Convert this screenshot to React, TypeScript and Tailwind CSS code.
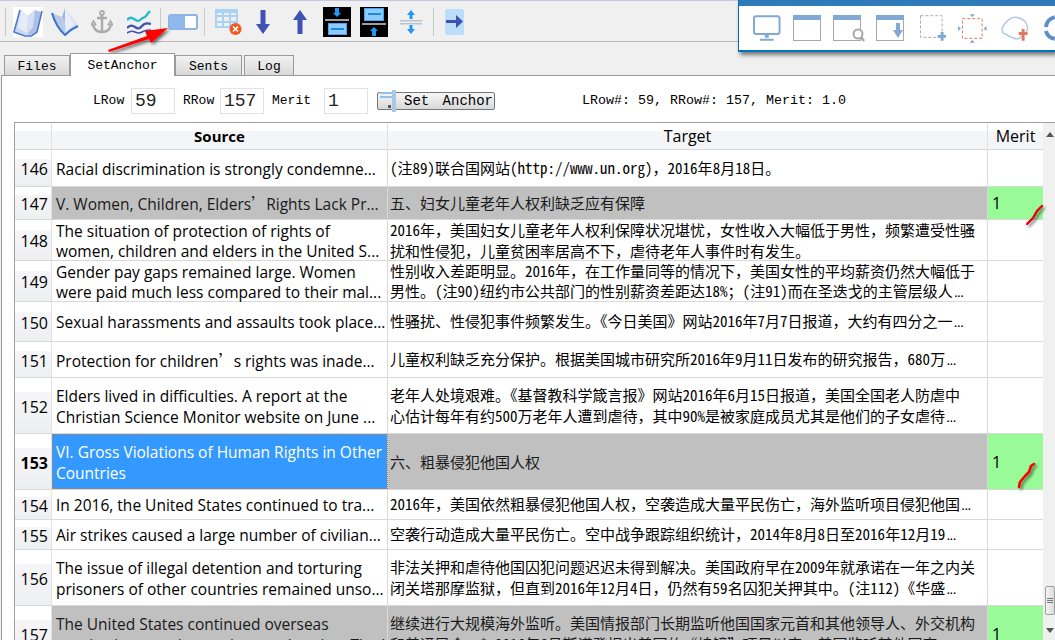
import React from "react";

const SRC = "font-['Open_Sans','Noto_Sans',sans-serif] text-[15.5px]";
const NUM = "font-['Open_Sans','Noto_Sans',sans-serif] text-[16px]";
const Q = () => <span className="inline-block w-[15px] font-['Noto_Sans_CJK_SC']">’</span>;

type Row = { n: number; h: number; s: React.ReactNode[]; t: string[]; gray?: boolean; sel?: boolean };
const rows: Row[] = [
  { n: 146, h: 37, s: ["Racial discrimination is strongly condemne..."], t: ["(注89)联合国网站(http://www.un.org)，2016年8月18日。"] },
  { n: 147, h: 33, gray: true, s: [<>V. Women, Children, Elders<Q />Rights Lack Pr...</>], t: ["五、妇女儿童老年人权利缺乏应有保障"] },
  { n: 148, h: 41, s: ["The situation of protection of rights of", "women, children and elders in the United S..."], t: ["2016年，美国妇女儿童老年人权利保障状况堪忧，女性收入大幅低于男性，频繁遭受性骚", "扰和性侵犯，儿童贫困率居高不下，虐待老年人事件时有发生。"] },
  { n: 149, h: 41, s: ["Gender pay gaps remained large. Women", "were paid much less compared to their mal..."], t: ["性别收入差距明显。2016年，在工作量同等的情况下，美国女性的平均薪资仍然大幅低于", "男性。(注90)纽约市公共部门的性别薪资差距达18%；(注91)而在圣迭戈的主管层级人..."] },
  { n: 150, h: 40, s: ["Sexual harassments and assaults took place..."], t: ["性骚扰、性侵犯事件频繁发生。《今日美国》网站2016年7月7日报道，大约有四分之一..."] },
  { n: 151, h: 36, s: [<>Protection for children<Q />s rights was inade...</>], t: ["儿童权利缺乏充分保护。根据美国城市研究所2016年9月11日发布的研究报告，680万..."] },
  { n: 152, h: 56, s: ["Elders lived in difficulties. A report at the", "Christian Science Monitor website on June ..."], t: ["老年人处境艰难。《基督教科学箴言报》网站2016年6月15日报道，美国全国老人防虐中", "心估计每年有约500万老年人遭到虐待，其中90%是被家庭成员尤其是他们的子女虐待..."] },
  { n: 153, h: 56, gray: true, sel: true, s: ["VI. Gross Violations of Human Rights in Other", "Countries"], t: ["六、粗暴侵犯他国人权"] },
  { n: 154, h: 30, s: ["In 2016, the United States continued to tra..."], t: ["2016年，美国依然粗暴侵犯他国人权，空袭造成大量平民伤亡，海外监听项目侵犯他国..."] },
  { n: 155, h: 30, s: ["Air strikes caused a large number of civilian..."], t: ["空袭行动造成大量平民伤亡。空中战争跟踪组织统计，2014年8月8日至2016年12月19..."] },
  { n: 156, h: 56, s: ["The issue of illegal detention and torturing", "prisoners of other countries remained unso..."], t: ["非法关押和虐待他国囚犯问题迟迟未得到解决。美国政府早在2009年就承诺在一年之内关", "闭关塔那摩监狱，但直到2016年12月4日，仍然有59名囚犯关押其中。(注112)《华盛..."] },
  { n: 157, h: 56, gray: true, s: ["The United States continued overseas", "monitoring on other nations and spying. The U..."], t: ["继续进行大规模海外监听。美国情报部门长期监听他国国家元首和其他领导人、外交机构", "和普通民众。* 2016年6月斯诺登揭出美国的“棱镜”项目以来，美国监听其他国家..."] },
];

const TargetLine = ({ text }: { text: string }) => {
  const more = text.endsWith("...");
  const body = more ? text.slice(0, -3) : text;
  const parts = body.split(/([\x20-\x7e]+)/);
  return (
    <div>
      {parts.map((p, i) =>
        i % 2 === 1 ? (
          <span key={i} className="[font-feature-settings:'hwid']">{p}</span>
        ) : (
          <span key={i}>{p}</span>
        )
      )}
      {more && <span className="font-['Liberation_Sans'] tracking-[-1px] ml-[1px]">...</span>}
    </div>
  );
};

const Sep = () => <div className="w-px h-[28px] bg-[#c8c8c8] shrink-0" />;
const Cell = ({ w, children }: { w: string; children: React.ReactNode }) => (
  <div className={`${w} h-full flex items-center justify-center shrink-0`}>{children}</div>
);

const Book1 = () => (
  <svg width="30" height="30" viewBox="0 0 30 30" className="bg-white">
    <path d="M2 25 L8 3 L15 9 L15 28 L12 28 Z" fill="#cbd6f0" />
    <path d="M15 9 L22 3 L28 5 L24 24 L17 28 L15 28 Z" fill="#aebfe8" />
    <path d="M8 3 L5 21 L14 26 L15 9 Z" fill="#e6ebf8" />
    <path d="M22 3 L20 20 L15 26 L15 9 Z" fill="#d6dff4" />
    <path d="M7 3 L1 25 L12 29 L18 29 L24 25 L29 4" fill="none" stroke="#4a78cc" strokeWidth="1.6" strokeLinejoin="round" />
  </svg>
);
const Book2 = () => (
  <svg width="30" height="30" viewBox="0 0 30 30">
    <path d="M2 6 L12 10 L15 14 L15 28 Q6 20 2 6 Z" fill="#b9c9ea" />
    <path d="M12 10 L15 1 L15 14 Z" fill="#9fb4e0" />
    <path d="M15 1 L28 19 L15 28 L15 14 Z" fill="#d3ddf3" />
    <path d="M15 1 L25 18 L16 24 L15 14 Z" fill="#e8edf9" />
    <path d="M2 6 Q6 20 15 28 Q21 22 28 19" fill="none" stroke="#3a72c6" strokeWidth="2" strokeLinejoin="round" />
  </svg>
);
const Anchor = () => (
  <svg width="22" height="24" viewBox="0 0 22 24" fill="none" stroke="#ababab" strokeWidth="2.4">
    <circle cx="11" cy="3" r="2" strokeWidth="1.8" />
    <path d="M11 5 V22 M6 8 H16 M2 14 Q3 22 11 22 Q19 22 20 14" />
    <path d="M0 15.5 L2.5 11 L5 15.5 M22 15.5 L19.5 11 L17 15.5" strokeWidth="1.6" />
  </svg>
);
const Waves = () => (
  <svg width="24" height="24" viewBox="0 0 24 24" fill="none" strokeWidth="2.2">
    <path d="M0 10 Q3 6 7 9 T13 10 T18 7 L23 1" stroke="#1fb9cf" />
    <path d="M0 18 Q4 14 8 17 T15 16 T24 14" stroke="#3f51b5" />
    <path d="M0 23 Q4 20 8 22 T15 22 T24 20" stroke="#3f51b5" strokeWidth="1.6" />
  </svg>
);
const Toggle = () => (
  <div className="w-[30px] h-[16px] rounded-[3px] border-2 border-[#8db4e2] bg-white flex">
    <div className="w-[15px] h-full bg-[#8fb8ec]" />
  </div>
);
const TableX = () => (
  <svg width="27" height="26" viewBox="0 0 27 26">
    <g fill="none" stroke="#a9d2f5" strokeWidth="2">
      <path d="M1 1 H22 V18 H1 Z M1 7 H22 M1 13 H22 M8 1 V19 M15 1 V19" />
    </g>
    <path d="M1 1 H22 V4 H1 Z" fill="#a9d2f5" />
    <circle cx="20.5" cy="20" r="6" fill="#f0591f" />
    <path d="M18 17.5 L23 22.5 M23 17.5 L18 22.5" stroke="#fff" strokeWidth="1.6" />
  </svg>
);
const ArrowV = ({ up }: { up?: boolean }) => (
  <svg width="14" height="24" viewBox="0 0 14 24" fill="#3f51b5">
    <path d={up ? "M7 0 L14 10 H9.5 V24 H4.5 V10 H0 Z" : "M7 24 L14 14 H9.5 V0 H4.5 V14 H0 Z"} />
  </svg>
);
const BlackDown = () => (
  <svg width="28" height="30" viewBox="0 0 28 30">
    <rect width="28" height="30" fill="#000" />
    <path d="M14 10 L18 6 H16 V1 H12 V6 H10 Z" fill="#2196f3" />
    <rect x="2" y="12" width="24" height="2" fill="#9e9e9e" />
    <rect x="5.5" y="16.5" width="18" height="11" fill="#90caf9" stroke="#42a5f5" />
    <rect x="8" y="21" width="13" height="2" fill="#1e88e5" />
  </svg>
);
const BlackUp = () => (
  <svg width="28" height="30" viewBox="0 0 28 30">
    <rect width="28" height="30" fill="#000" />
    <rect x="4.5" y="1.5" width="19" height="12" fill="#90caf9" stroke="#42a5f5" />
    <rect x="8" y="6" width="13" height="2" fill="#1e88e5" />
    <rect x="2" y="16" width="24" height="2" fill="#9e9e9e" />
    <path d="M14 20 L18 24 H16 V29 H12 V24 H10 Z" fill="#2196f3" />
  </svg>
);
const Split = () => (
  <svg width="22" height="24" viewBox="0 0 22 24">
    <path d="M11 0 L15 5 H12.5 V9 H9.5 V5 H7 Z M11 24 L15 19 H12.5 V15 H9.5 V19 H7 Z" fill="#2196f3" />
    <rect y="10" width="22" height="1.5" fill="#b6c4cf" />
    <rect y="13" width="22" height="1.5" fill="#b6c4cf" />
  </svg>
);
const ArrowBox = () => (
  <div className="w-[19px] h-[26px] rounded-[2px] bg-[#bbdefb] flex items-center justify-center">
    <svg width="17" height="13" viewBox="0 0 17 13" fill="#3f51b5"><path d="M0 5 H10 V0 L17 6.5 L10 13 V8 H0 Z" /></svg>
  </div>
);

const Win = ({ children }: { children?: React.ReactNode }) => (
  <svg width="32" height="29" viewBox="0 0 32 29" fill="none">
    <rect x="0.5" y="2.5" width="27" height="24" stroke="#a8a8a8" />
    <rect y="1" width="28" height="5" fill="#82a9d1" />
    {children}
  </svg>
);

const FloatBar = () => (
  <div className="absolute right-0 top-0 w-[317px] h-[52px] bg-white border-l border-b-2 border-[#0072c6] shadow-[2px_3px_4px_rgba(0,0,0,0.5)] flex flex-col">
    <div className="h-[6px] bg-[#2f7ab8] shrink-0" />
    <div className="flex items-center flex-1 pl-[14px]">
      <svg width="28" height="27" viewBox="0 0 28 27" fill="none" className="mr-[12px]">
        <rect x="1" y="1" width="26" height="18" rx="2" stroke="#82a9d1" strokeWidth="2" />
        <path d="M12 20 H16 V23 H12 Z M7 24 H21 V26 H7 Z" fill="#82a9d1" />
      </svg>
      <div className="mr-[8px]"><Win /></div>
      <div className="mr-[11px]">
        <Win><circle cx="25" cy="20" r="4.5" fill="#fff" stroke="#a8a8a8" strokeWidth="2" /><path d="M28 23 L31 27" stroke="#a8a8a8" strokeWidth="2.5" /></Win>
      </div>
      <div className="mr-[12px]">
        <Win><path d="M20 9 H24 V16 H27 L22 24 L17 16 H20 Z" fill="#82a9d1" /></Win>
      </div>
      <svg width="27" height="27" viewBox="0 0 27 27" fill="none" className="mr-[12px]">
        <rect x="0.5" y="0.5" width="22" height="22" stroke="#a8a8a8" strokeDasharray="3 2" />
        <path d="M18 20 H21 V17 H24 V20 H27 V23 H24 V26 H21 V23 H18 Z" fill="#82a9d1" />
      </svg>
      <svg width="29" height="29" viewBox="0 0 29 29" fill="none" className="mr-[14px]">
        <rect x="4.5" y="4.5" width="20" height="20" stroke="#e0765a" strokeDasharray="3 2" />
        <path d="M12 0 H17 L14.5 3 Z M12 29 H17 L14.5 26 Z M0 12 V17 L3 14.5 Z M29 12 V17 L26 14.5 Z" fill="#82a9d1" />
      </svg>
      <svg width="28" height="27" viewBox="0 0 28 27" fill="none" className="mr-[15px]">
        <path d="M1 14 C3 7 10 2 15 2 C20 3 27 6 27 13 C27 19 22 20 18 24 C12 25 7 20 2 18 Z" stroke="#a9c6e3" strokeWidth="1.4" />
        <path d="M18 17 H21 V14 H24 V17 H27 V20 H24 V26 H21 V20 H18 Z" fill="#e07a5f" />
      </svg>
      <svg width="12" height="28" viewBox="0 0 12 28" fill="none">
        <path d="M12 3 A11 11 0 0 0 3 13 M3 17 A11 11 0 0 0 12 25" stroke="#5b8fc7" strokeWidth="4" />
      </svg>
    </div>
  </div>
);

const Tab = ({ label, w, active }: { label: string; w: string; active?: boolean }) => (
  <div
    className={
      active
        ? `${w} h-[23px] -mb-px z-10 bg-white border border-b-0 border-[#9a9a9a] flex items-center justify-center text-[13px] pt-[1px]`
        : `${w} h-[20px] border border-b-0 border-[#9a9a9a] bg-[linear-gradient(to_bottom,#f2f2f2,#d9d9d9)] flex items-center justify-center text-[13px] pt-[2px]`
    }
  >
    {label}
  </div>
);

const Field = ({ v }: { v: string }) => (
  <div className="w-[44px] h-[26px] border border-[#dfe3e8] bg-white flex items-center pl-[3px] text-[18px] text-[#222] shrink-0">{v}</div>
);

const COL = { head: "w-[37px]", src: "w-[336px]", tgt: "w-[600px]", merit: "w-[55px]" };

export default function App() {
  return (
    <div className="relative h-[640px] w-[1055px] overflow-hidden bg-[#f0f0f0] text-black font-['Liberation_Mono',monospace]">
      <div className="h-[2px] border-t border-[#c9c9de] bg-[#ececf3]" />
      <div className="h-[40px] border-b border-[#b9b9b9] flex items-center pl-[5px]">
        <Sep />
        <div className="w-[3px]" />
        <Cell w="w-[37px]"><Book1 /></Cell>
        <Cell w="w-[37px]"><Book2 /></Cell>
        <Cell w="w-[37px]"><Anchor /></Cell>
        <Cell w="w-[37px]"><Waves /></Cell>
        <div className="w-[3px]" />
        <Sep />
        <Cell w="w-[43px]"><Toggle /></Cell>
        <Sep />
        <Cell w="w-[46px]"><TableX /></Cell>
        <Cell w="w-[24px]"><ArrowV /></Cell>
        <div className="w-[5px]" />
        <Cell w="w-[40px]"><ArrowV up /></Cell>
        <Cell w="w-[34px]"><BlackDown /></Cell>
        <Cell w="w-[40px]"><BlackUp /></Cell>
        <Cell w="w-[34px]"><Split /></Cell>
        <div className="w-[5px]" />
        <Sep />
        <Cell w="w-[40px]"><ArrowBox /></Cell>
      </div>

      <div className="h-[33px] flex items-end pl-[4px]">
        <Tab label="Files" w="w-[66px]" />
        <Tab label="SetAnchor" w="w-[105px]" active />
        <Tab label="Sents" w="w-[67px]" />
        <div className="w-[2px]" />
        <Tab label="Log" w="w-[50px]" />
      </div>

      <div className="ml-[1px] bg-white border-t border-l border-[#9a9a9a] h-[565px] overflow-hidden">
        <div className="h-[46px] flex items-center text-[13px] pl-[91px] pt-[4px]">
          <span className="w-[38px]">LRow</span>
          <Field v="59" />
          <span className="w-[45px] pl-[8px]">RRow</span>
          <Field v="157" />
          <span className="w-[60px] pl-[8px]">Merit</span>
          <Field v="1" />
          <div className="ml-[9px] w-[118px] h-[18px] border border-[#777] rounded-[2px] bg-[linear-gradient(to_bottom,#f7f7f7,#d8d8d8)] flex items-center text-[14px] pl-[2px] shrink-0">
            <svg width="20" height="22" viewBox="0 0 20 22" className="shrink-0 -my-[3px]">
              <rect x="0" y="2" width="16" height="2" fill="#8fc1ea" />
              <rect x="0" y="6" width="12" height="2" fill="#8fc1ea" />
              <rect x="12" y="0" width="4" height="22" fill="#a9c9e6" />
              <rect x="8" y="15" width="3" height="3" fill="#555" />
            </svg>
            <span className="ml-[4px] whitespace-pre [word-spacing:5px]">Set Anchor</span>
          </div>
          <span className="ml-[87px] whitespace-pre text-[13.33px]">LRow#: 59, RRow#: 157, Merit: 1.0</span>
        </div>

        <div className="ml-[12px] border-t border-l border-[#a0a0a0] flex">
          <div className="w-[1028px] shrink-0">
            <div className="h-[27px] flex border-b border-[#d9d9d9] bg-[linear-gradient(to_bottom,#fff_30%,#f4f5f7_30%)] font-['Open_Sans','Noto_Sans',sans-serif] text-[16px]">
              <div className={`${COL.head} border-r border-[#e2e2e2]`} />
              <div className={`${COL.src} border-r border-[#e2e2e2] flex items-center justify-center font-bold text-[15px]`}>Source</div>
              <div className={`${COL.tgt} border-r border-[#e2e2e2] flex items-center justify-center`}>Target</div>
              <div className={`${COL.merit} flex items-center justify-center`}>Merit</div>
            </div>
            {rows.map((r) => (
              <div key={r.n} className="flex border-b border-[#d9d9d9]" style={{ height: r.h }}>
                <div className={`${COL.head} border-r border-[#e2e2e2] bg-[linear-gradient(to_bottom,#fff_25%,#f6f6f8_25%,#eeeff1_100%)] flex items-center justify-end pr-[3px] pt-[2px] ${NUM} ${r.sel ? "font-bold" : ""}`}>
                  {r.n}
                </div>
                <div
                  className={`${COL.src} border-r border-[#d9d9d9] flex flex-col justify-center pl-[4px] pt-[2px] leading-[20.5px] whitespace-nowrap ${SRC} ${
                    r.sel ? "bg-[#3399ff] text-white outline-1 outline-dotted -outline-offset-1 outline-[#c08040]" : r.gray ? "bg-[#c0c0c0] text-[#1a1a1a]" : ""
                  }`}
                >
                  {r.s.map((l, i) => <div key={i}>{l}</div>)}
                </div>
                <div className={`${COL.tgt} border-r border-[#d9d9d9] flex flex-col justify-center pl-[2px] pt-[1px] text-[15px] leading-[20.5px] whitespace-nowrap font-['Noto_Sans_CJK_SC',sans-serif] ${r.gray ? "bg-[#c0c0c0] text-[#1a1a1a]" : ""}`}>
                  {r.t.map((l, i) => <TargetLine key={i} text={l} />)}
                </div>
                <div className={`${COL.merit} flex items-center pl-[4px] ${NUM} ${r.gray ? "bg-[#98fb98]" : ""}`}>{r.gray ? "1" : ""}</div>
              </div>
            ))}
          </div>
          <div className="w-[12px] shrink-0 bg-[#f0f0f0] relative h-[520px]">
            <svg width="8" height="5" viewBox="0 0 8 5" className="absolute left-[3px] top-[9px]"><path d="M0 5 L4 0 L8 5 Z" fill="#555" /></svg>
            <div className="absolute left-[2px] right-0 top-[463px] h-[29px] border border-[#a0a0a0] rounded-[2px] bg-[linear-gradient(to_right,#f5f5f5,#dcdcdc)] flex flex-col items-center justify-center gap-[1px]">
              <div className="w-[6px] h-px bg-[#777]" /><div className="w-[6px] h-px bg-[#777]" /><div className="w-[6px] h-px bg-[#777]" />
            </div>
            <svg width="8" height="5" viewBox="0 0 8 5" className="absolute left-[3px] top-[505px]"><path d="M0 0 L4 5 L8 0 Z" fill="#555" /></svg>
          </div>
        </div>
      </div>

      <FloatBar />

      {/* annotations drawn on top of the screenshot */}
      <svg width="1055" height="640" viewBox="0 0 1055 640" fill="none" className="absolute left-0 top-0 pointer-events-none">
        <defs>
          <filter id="sh" x="-30%" y="-30%" width="170%" height="170%">
            <feDropShadow dx="2" dy="2" stdDeviation="1.6" floodColor="#000" floodOpacity="0.55" />
          </filter>
        </defs>
        <g filter="url(#sh)">
          <path d="M108 50 L147 36 L145 31 L168 28 L151 43 L149 39 L109 52 Z" fill="#ff0000" />
          <path d="M1027 224 L1033 218 L1037 211 L1042 206" stroke="#e8000c" strokeWidth="2.4" strokeLinecap="round" />
          <path d="M1019 487 L1020 482 L1025 476 L1029 472 L1031 466 L1034 464" stroke="#ff0000" strokeWidth="2.6" strokeLinecap="round" strokeLinejoin="round" />
        </g>
      </svg>
    </div>
  );
}
